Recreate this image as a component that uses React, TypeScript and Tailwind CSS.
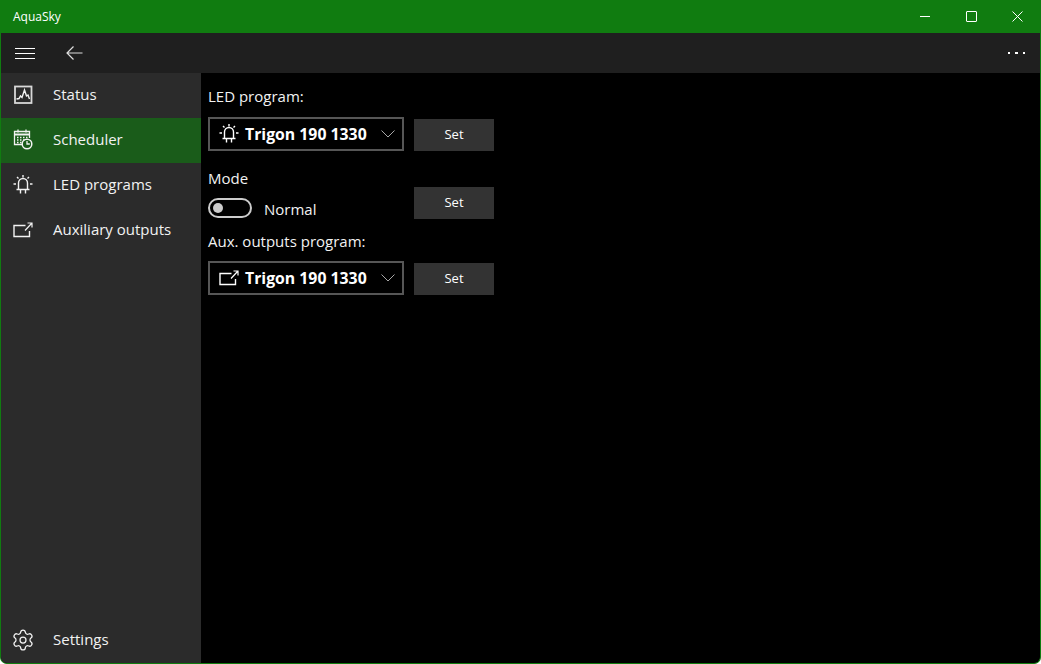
import { Settings } from "lucide-react";

function StatusIcon() {
  return (
    <svg width="20" height="20" viewBox="0 0 20 20" fill="none" stroke="currentColor" strokeWidth="1.4">
      <rect x="2" y="1.5" width="16.5" height="16.5" strokeWidth="1.8" stroke="#d8d8d8" />
      <path d="M3.5 14l2.500-.5 1.500-2.500 1.500 1.500L11.500 5l2 6 1.500-1 1.500 4" />
    </svg>
  );
}

function CalendarIcon() {
  return (
    <svg width="20" height="22" viewBox="0 0 20 22" fill="none" stroke="currentColor" strokeWidth="1.3">
      <path d="M9 15.500H1.500V2.500h15V9" />
      <path d="M1.500 5.500h15" strokeWidth="2" />
      <path d="M5 .5v3M13 .5v3" />
      <path d="M4 8.500h1.500M7 8.500h1.500M10 8.500h1.500M13 8.500h1.500M4 11h1.500M7 11h1.500M10 11h1.500M4 13.500h1.500M7 13.500h1.500" />
      <circle cx="14" cy="15" r="4.8" strokeWidth="1.5" />
      <path d="M14 12v3h2.800" />
    </svg>
  );
}

function LedIcon() {
  return (
    <svg width="20" height="20" viewBox="0 0 20 20" fill="none" stroke="currentColor" strokeWidth="1.4">
      <path d="M5.500 14.500V8a4.500 4.500 0 0 1 9 0v6.500" />
      <path d="M3.500 14.500h13M7.500 14.500v4M12.500 14.500v4" />
      <path d="M10 0v2.500M4 2l1.500 1.500M16 2l-1.500 1.500M.5 9h2.500M17 9h2.500" />
    </svg>
  );
}

function AuxIcon() {
  return (
    <svg width="20" height="20" viewBox="0 0 20 20" fill="none" stroke="currentColor" strokeWidth="1.2">
      <path d="M12.500 5.500H1v11h15.500V11" strokeWidth="1.4" />
      <path d="M12 10.500l6.500-7M14.500 3h4.500v4.500" />
    </svg>
  );
}

function NavItem({ label, icon, active }: { label: string; icon: React.ReactNode; active?: boolean }) {
  return (
    <div className={`flex h-[45px] items-center gap-[20px] pb-[2px] pl-[12px] text-[15px] text-[#f2f2f2] ${active ? "bg-[#1a5c1a]" : ""}`}>
      <span className="flex w-[20px] justify-center">{icon}</span>
      <span>{label}</span>
    </div>
  );
}

function Combo({ icon }: { icon: React.ReactNode }) {
  return (
    <div className="flex h-[34px] w-[196px] items-center border-2 border-[#565656] pl-[9px] pr-[7px] text-white">
      <span className="flex w-[26px]">{icon}</span>
      <span className="flex-1 pt-[2px] text-[15.8px] font-bold">Trigon 190 1330</span>
      <svg width="14" height="8" viewBox="0 0 14 8" fill="none" stroke="#a8a8a8" strokeWidth="1">
        <path d="M.5.500L7 7l6.500-6.500" />
      </svg>
    </div>
  );
}

function SetButton() {
  return <div className="flex h-[32px] w-[80px] items-center justify-center bg-[#333333] text-[13px] text-white">Set</div>;
}

export default function App() {
  return (
    <div className="flex h-[664px] w-[1041px] flex-col overflow-hidden rounded-b-[7px] border-x border-b border-[#107c10] bg-black font-['Open_Sans','Noto_Sans',sans-serif] text-white">
      {/* title bar */}
      <div className="-mx-px flex h-[33px] shrink-0 items-center bg-[#107c10]">
        <span className="pl-[13px] text-[12px] text-white">AquaSky</span>
        <div className="ml-auto flex items-center pr-[1px]">
          <div className="flex w-[46px] justify-center">
            <div className="h-px w-[10px] bg-white" />
          </div>
          <div className="flex w-[46px] justify-center">
            <div className="h-[11px] w-[11px] rounded-[1px] border border-white" />
          </div>
          <div className="flex w-[46px] justify-center">
            <svg width="11" height="11" viewBox="0 0 11 11" stroke="white" strokeWidth="1">
              <path d="M.5.500l10 10M10.500.500l-10 10" />
            </svg>
          </div>
        </div>
      </div>

      {/* command bar */}
      <div className="flex h-[40px] shrink-0 items-center bg-[#1f1f1f]">
        <div className="ml-[14px] flex h-[11px] w-[20px] flex-col justify-between">
          <div className="h-px bg-white" />
          <div className="h-px bg-white" />
          <div className="h-px bg-white" />
        </div>
        <svg width="17" height="14" viewBox="0 0 17 14" fill="none" stroke="#dedede" strokeWidth="1.2" className="ml-[31px]">
          <path d="M16.500 7H1M7.500.500L1 7l6.500 6.500" />
        </svg>
        <div className="ml-auto mr-[15px] flex gap-[5px]">
          <div className="h-[2.5px] w-[2.5px] bg-white" />
          <div className="h-[2.5px] w-[2.5px] bg-white" />
          <div className="h-[2.5px] w-[2.5px] bg-white" />
        </div>
      </div>

      <div className="flex min-h-0 flex-1">
        {/* nav pane */}
        <div className="flex w-[200px] shrink-0 flex-col bg-[#2b2b2b]">
          <NavItem label="Status" icon={<StatusIcon />} />
          <NavItem label="Scheduler" active icon={<CalendarIcon />} />
          <NavItem label="LED programs" icon={<LedIcon />} />
          <NavItem label="Auxiliary outputs" icon={<AuxIcon />} />
          <div className="mt-auto">
            <NavItem label="Settings" icon={<Settings size={24} strokeWidth={1.25} className="shrink-0" />} />
          </div>
        </div>

        {/* content */}
        <div className="flex flex-1 flex-col pl-[7px] pt-[14px] text-[15px] text-[#f2f2f2]">
          <div className="flex items-end gap-[10px]">
            <div className="flex flex-col gap-[10px]">
              <div className="h-[20px] leading-[18px]">LED program:</div>
              <Combo icon={<LedIcon />} />
            </div>
            <SetButton />
          </div>
          <div className="flex h-[68px] items-end gap-[10px]">
            <div className="mb-px flex w-[196px] flex-col gap-[10px]">
              <div className="h-[20px] leading-[20px]">Mode</div>
              <div className="flex h-[20px] items-center gap-[12px]">
                <div className="flex h-[20px] w-[44px] items-center rounded-full border-2 border-[#cccccc] pl-[3px]">
                  <div className="h-[10px] w-[10px] rounded-full bg-[#cccccc]" />
                </div>
                <span className="pt-[2px]">Normal</span>
              </div>
            </div>
            <SetButton />
          </div>
          <div className="mt-[12px] flex items-end gap-[10px]">
            <div className="flex flex-col gap-[10px]">
              <div className="h-[20px] leading-[20px]">Aux. outputs program:</div>
              <Combo icon={<AuxIcon />} />
            </div>
            <SetButton />
          </div>
        </div>
      </div>
    </div>
  );
}
